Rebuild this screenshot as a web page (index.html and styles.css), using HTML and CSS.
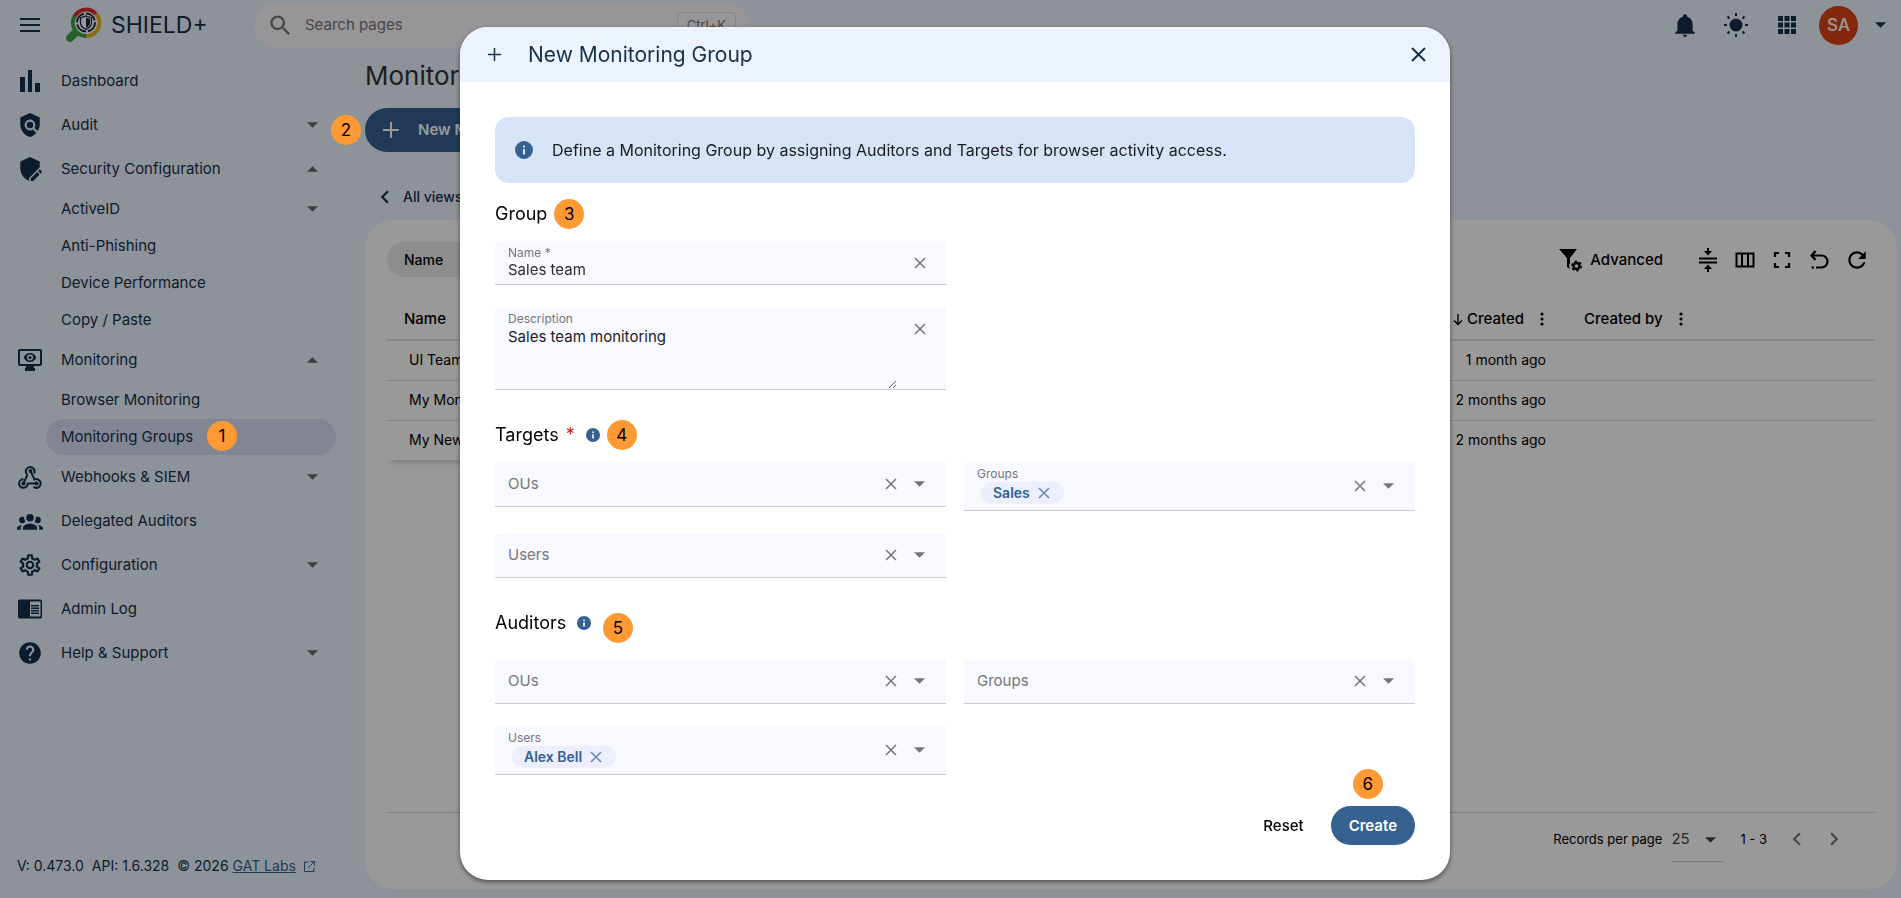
FILE: index.html
```
<!DOCTYPE html>
<html lang="en">
<head>
    <meta charset="UTF-8">
    <meta name="viewport" content="width=device-width, initial-scale=1.0">
    <title>SHIELD+ - Monitoring Groups</title>
    <link rel="stylesheet" href="styles.css">
</head>
<body>
    <svg class="sprite" aria-hidden="true">
        <symbol id="i-caret" viewBox="0 0 12 6"><path d="M0 0h12L6 6z"/></symbol>
        <symbol id="i-x" viewBox="0 0 12 12"><path d="M1 1l10 10M11 1L1 11" fill="none" stroke="currentColor" stroke-width="1.500"/></symbol>
        <symbol id="i-plus" viewBox="0 0 16 16"><path d="M8 0v16M0 8h16" fill="none" stroke="currentColor" stroke-width="2"/></symbol>
        <symbol id="i-info" viewBox="0 0 18 18"><path d="M9 0a9 9 0 1 0 0 18A9 9 0 0 0 9 0zm1 13.500H8V8h2v5.500zM10 6.500H8v-2h2v2z"/></symbol>
        <symbol id="i-dots" viewBox="0 0 4 14"><circle cx="2" cy="2" r="1.600"/><circle cx="2" cy="7" r="1.600"/><circle cx="2" cy="12" r="1.600"/></symbol>
        <symbol id="i-left" viewBox="0 0 24 24"><path d="M15.410 16.590L10.830 12l4.580-4.590L14 6l-6 6 6 6z"/></symbol>
        <symbol id="i-right" viewBox="0 0 24 24"><path d="M8.590 16.590L13.170 12 8.590 7.410 10 6l6 6-6 6z"/></symbol>
    </svg>

    <div class="app">
        <header class="topbar">
            <button class="icon-button" type="button" aria-label="Menu">
                <svg width="20" height="14" viewBox="0 0 20 14"><path d="M0 0h20v2H0zM0 6h20v2H0zM0 12h20v2H0z"/></svg>
            </button>
            <a href="#" class="logo">
                <svg width="36" height="36" viewBox="0 0 36 36">
                    <path d="M12 24L5 31" stroke="#43a047" stroke-width="8" stroke-linecap="round"/>
                    <circle cx="21" cy="16" r="12" fill="#fff"/>
                    <g fill="none" stroke-width="4">
                        <path d="M9.500 9.500A13.200 13.200 0 0 1 31 7" stroke="#d93030"/>
                        <path d="M31 7a13.200 13.200 0 0 1-9.500 22" stroke="#e5b416"/>
                        <path d="M21.500 29A13.200 13.200 0 0 1 9.500 9.500" stroke="#43a047"/>
                    </g>
                    <circle cx="21" cy="15.500" r="9" fill="none" stroke="#16263a" stroke-width="2" stroke-dasharray="12 2"/>
                    <path d="M21 9l5.500 2v4.500c0 3.500-2.300 5.500-5.500 7-3.200-1.500-5.500-3.500-5.500-7V11z" fill="#fff" stroke="#16263a" stroke-width="1.300"/>
                    <path d="M21 10.500v10.500c2.400-1.200 4-2.800 4-5.500v-3.500z" fill="#16263a"/>
                </svg>
                <span>SHIELD+</span>
            </a>
            <label class="search">
                <svg width="27" height="27" viewBox="0 0 24 24"><path d="M15.500 14h-.790l-.280-.270C15.410 12.590 16 11.110 16 9.500 16 5.910 13.090 3 9.500 3S3 5.910 3 9.500 5.910 16 9.500 16c1.610 0 3.090-.590 4.230-1.570l.270.280v.790l5 4.990L20.490 19l-4.990-5zm-6 0C7.010 14 5 11.990 5 9.500S7.010 5 9.500 5 14 7.010 14 9.500 11.990 14 9.500 14z"/></svg>
                <input type="search" placeholder="Search pages" aria-label="Search pages">
                <kbd>Ctrl+K</kbd>
            </label>
            <div class="topbar-actions">
                <button class="icon-button" type="button" aria-label="Notifications"><svg width="26" height="26" viewBox="0 0 24 24"><path d="M21,19V20H3V19L5,17V11C5,7.900 7.030,5.170 10,4.290C10,4.190 10,4.100 10,4A2,2 0 0,1 14,4C14,4.100 14,4.190 14,4.290C16.970,5.170 19,7.900 19,11V17L21,19M14,21A2,2 0 0,1 10,21"/></svg></button>
                <button class="icon-button" type="button" aria-label="Theme"><svg width="26" height="26" viewBox="0 0 26 26"><circle cx="13" cy="13" r="6.500"/><path d="M13 1v3M13 22v3M1 13h3M22 13h3M4.500 4.500l2 2M19.500 19.500l2 2M4.500 21.500l2-2M19.500 6.500l2-2" stroke="currentColor" stroke-width="2"/></svg></button>
                <button class="icon-button" type="button" aria-label="Apps"><svg width="26" height="26" viewBox="0 0 26 26"><path d="M4 4h5v5H4zM10.500 4h5v5h-5zM17 4h5v5h-5zM4 10.500h5v5H4zM10.500 10.500h5v5h-5zM17 10.500h5v5h-5zM4 17h5v5H4zM10.500 17h5v5h-5zM17 17h5v5h-5z"/></svg></button>
                <button class="account" type="button"><span class="avatar">SA</span><svg width="11" height="6"><use href="#i-caret"/></svg></button>
            </div>
        </header>

        <aside class="sidebar">
            <nav class="nav">
                <a href="#" class="nav-item">
                    <svg width="26" height="26" viewBox="0 0 26 26"><path d="M3 9h5v15H3zM11 2h4v22h-4zM18 15h5v9h-5z"/></svg>
                    <span>Dashboard</span>
                </a>
                <a href="#" class="nav-item">
                    <svg width="26" height="26" viewBox="0 0 24 24"><path d="M21 5l-9-4-9 4v6c0 5.550 3.840 10.740 9 12 2.300-.560 4.330-1.900 5.880-3.710l-3.120-3.120c-1.940 1.290-4.580 1.070-6.290-.640-1.950-1.950-1.950-5.120 0-7.070 1.950-1.950 5.120-1.950 7.070 0 1.710 1.710 1.920 4.350.640 6.290l2.900 2.900C20.290 15.690 21 13.380 21 11z"/><circle cx="12" cy="12" r="3"/></svg>
                    <span>Audit</span>
                    <svg class="caret" width="11" height="6"><use href="#i-caret"/></svg>
                </a>
                <a href="#" class="nav-item">
                    <svg width="26" height="26" viewBox="0 0 24 24"><path d="M21 10V5l-9-4-9 4v6c0 5.300 3.400 10.200 8.200 11.800v-2.600L21 10.400zM12.700 23v-2.400l5.900-5.900 2.300 2.300-5.900 6zM19.400 13.900l1.100-1.100c.3-.3.700-.3 1 0l1.300 1.300c.3.300.3.700 0 1l-1.100 1.100z"/></svg>
                    <span>Security Configuration</span>
                    <svg class="caret caret-up" width="11" height="6"><use href="#i-caret"/></svg>
                </a>
                <div class="nav-children">
                    <a href="#" class="nav-child"><span>ActiveID</span><svg class="caret" width="11" height="6"><use href="#i-caret"/></svg></a>
                    <a href="#" class="nav-child"><span>Anti-Phishing</span></a>
                    <a href="#" class="nav-child"><span>Device Performance</span></a>
                    <a href="#" class="nav-child"><span>Copy / Paste</span></a>
                </div>
                <a href="#" class="nav-item">
                    <svg width="26" height="26" viewBox="0 0 26 26"><path d="M3 2h20a2 2 0 0 1 2 2v13a2 2 0 0 1-2 2h-6v2h1v3H8v-3h1v-2H3a2 2 0 0 1-2-2V4a2 2 0 0 1 2-2zm0 2v13h20V4z" fill-rule="evenodd"/><path d="M13 6c3 0 5.300 1.800 6.300 4.500C18.300 13.200 16 15 13 15s-5.300-1.800-6.300-4.500C7.700 7.800 10 6 13 6zm0 1.500a3 3 0 1 0 0 6 3 3 0 0 0 0-6z" fill-rule="evenodd"/><circle cx="13" cy="10.500" r="1.600"/></svg>
                    <span>Monitoring</span>
                    <svg class="caret caret-up" width="11" height="6"><use href="#i-caret"/></svg>
                </a>
                <div class="nav-children">
                    <a href="#" class="nav-child"><span>Browser Monitoring</span></a>
                    <a href="#" class="nav-child active"><span>Monitoring Groups</span><b class="step step-nav">1</b></a>
                </div>
                <a href="#" class="nav-item">
                    <svg width="26" height="26" viewBox="0 0 26 26"><g fill="none" stroke="currentColor" stroke-width="2"><path d="M10.200 10.500a4.300 4.300 0 1 1 6.800-1M13.500 7l4 8.500a4.300 4.300 0 1 1-1 7.200M6.500 19.500l4-9"/><path d="M6.500 15.200a4.300 4.300 0 1 0 4.200 4.300h9"/></g><circle cx="13.500" cy="7" r="2"/><circle cx="6.500" cy="19.500" r="2"/><circle cx="19.500" cy="19.500" r="2"/></svg>
                    <span>Webhooks &amp; SIEM</span>
                    <svg class="caret" width="11" height="6"><use href="#i-caret"/></svg>
                </a>
                <a href="#" class="nav-item">
                    <svg width="26" height="26" viewBox="0 0 24 24"><path d="M12,5.500A3.500,3.500 0 0,1 15.500,9A3.500,3.500 0 0,1 12,12.500A3.500,3.500 0 0,1 8.500,9A3.500,3.500 0 0,1 12,5.500M5,8C5.560,8 6.080,8.150 6.530,8.420C6.380,9.850 6.800,11.270 7.660,12.380C7.160,13.340 6.160,14 5,14A3,3 0 0,1 2,11A3,3 0 0,1 5,8M19,8A3,3 0 0,1 22,11A3,3 0 0,1 19,14C17.840,14 16.840,13.340 16.340,12.380C17.200,11.270 17.620,9.850 17.470,8.420C17.920,8.150 18.440,8 19,8M5.500,18.250C5.500,16.180 8.410,14.500 12,14.500C15.590,14.500 18.500,16.180 18.500,18.250V20H5.500V18.250M0,20V18.500C0,17.110 1.890,15.940 4.450,15.600C3.860,16.280 3.500,17.220 3.500,18.250V20H0M24,20H20.500V18.250C20.500,17.220 20.140,16.280 19.550,15.600C22.110,15.940 24,17.110 24,18.500V20Z"/></svg>
                    <span>Delegated Auditors</span>
                </a>
                <a href="#" class="nav-item">
                    <svg width="26" height="26" viewBox="0 0 24 24"><path d="M12,8A4,4 0 0,1 16,12A4,4 0 0,1 12,16A4,4 0 0,1 8,12A4,4 0 0,1 12,8M12,10A2,2 0 0,0 10,12A2,2 0 0,0 12,14A2,2 0 0,0 14,12A2,2 0 0,0 12,10M10,22C9.750,22 9.540,21.820 9.500,21.580L9.130,18.930C8.500,18.680 7.960,18.340 7.440,17.940L4.950,18.950C4.730,19.030 4.460,18.950 4.340,18.730L2.340,15.270C2.210,15.050 2.270,14.780 2.460,14.630L4.570,12.970L4.500,12L4.570,11L2.460,9.370C2.270,9.220 2.210,8.950 2.340,8.730L4.340,5.270C4.460,5.050 4.730,4.960 4.950,5.050L7.440,6.050C7.960,5.660 8.500,5.320 9.130,5.070L9.500,2.420C9.540,2.180 9.750,2 10,2H14C14.250,2 14.460,2.180 14.500,2.420L14.870,5.070C15.500,5.320 16.040,5.660 16.560,6.050L19.050,5.050C19.270,4.960 19.540,5.050 19.660,5.270L21.660,8.730C21.790,8.950 21.730,9.220 21.540,9.370L19.430,11L19.500,12L19.430,13L21.540,14.630C21.730,14.780 21.790,15.050 21.660,15.270L19.660,18.730C19.540,18.950 19.270,19.040 19.050,18.950L16.560,17.950C16.040,18.340 15.500,18.680 14.870,18.930L14.500,21.580C14.460,21.820 14.250,22 14,22H10M11.250,4L10.880,6.610C9.680,6.860 8.620,7.500 7.850,8.390L5.440,7.350L4.690,8.650L6.800,10.200C6.400,11.370 6.400,12.640 6.800,13.800L4.680,15.360L5.430,16.660L7.860,15.620C8.630,16.500 9.680,17.140 10.870,17.380L11.240,20H12.760L13.130,17.390C14.320,17.140 15.370,16.500 16.140,15.620L18.570,16.660L19.320,15.360L17.200,13.810C17.600,12.640 17.600,11.370 17.200,10.200L19.310,8.650L18.560,7.350L16.150,8.390C15.380,7.500 14.320,6.860 13.120,6.620L12.750,4H11.250Z"/></svg>
                    <span>Configuration</span>
                    <svg class="caret" width="11" height="6"><use href="#i-caret"/></svg>
                </a>
                <a href="#" class="nav-item">
                    <svg width="26" height="26" viewBox="0 0 26 26"><path d="M2.500 3.500h21A1.500 1.500 0 0 1 25 5v16a1.500 1.500 0 0 1-1.500 1.500h-21A1.500 1.500 0 0 1 1 21V5a1.500 1.500 0 0 1 1.500-1.500zM13 5.500v15h10.500v-15zM14 9h8v1.500h-8zM14 11.500h8V13h-8zM14 14h8v1.500h-8zM14 16.500h8V18h-8z" fill-rule="evenodd"/></svg>
                    <span>Admin Log</span>
                </a>
                <a href="#" class="nav-item">
                    <svg width="26" height="26" viewBox="0 0 24 24"><path d="M12 2C6.480 2 2 6.480 2 12s4.480 10 10 10 10-4.480 10-10S17.520 2 12 2zm1 17h-2v-2h2v2zm2.070-7.750l-.900.920C13.450 12.900 13 13.500 13 15h-2v-.500c0-1.100.450-2.100 1.170-2.830l1.240-1.260c.370-.360.590-.860.590-1.410 0-1.100-.900-2-2-2s-2 .900-2 2H8c0-2.210 1.790-4 4-4s4 1.790 4 4c0 .880-.360 1.680-.930 2.250z"/></svg>
                    <span>Help &amp; Support</span>
                    <svg class="caret" width="11" height="6"><use href="#i-caret"/></svg>
                </a>
            </nav>
            <footer class="version">
                <span>V: 0.473.0</span>
                <span>API: 1.6.328</span>
                <span>© 2026 <a href="#">GAT Labs</a></span>
                <svg class="external" width="11" height="11" viewBox="0 0 11 11"><path d="M4.500 1H.500v9.500H10V6.500M6.500 .500h4V4.500M10.500.500L4 7" fill="none" stroke="currentColor"/></svg>
            </footer>
        </aside>

        <main class="content">
            <h1>Monitoring Groups</h1>
            <div class="new-group">
                <button class="button button-primary button-large" type="button"><svg width="16" height="16"><use href="#i-plus"/></svg> New Monitoring Group</button>
                <b class="step step-new">2</b>
            </div>
            <a href="#" class="back"><svg width="26" height="26"><use href="#i-left"/></svg>All views</a>

            <section class="card">
                <div class="toolbar">
                    <button class="filter-chip" type="button">Name</button>
                    <div class="toolbar-actions">
                        <button class="advanced" type="button">
                            <svg width="24" height="24" viewBox="0 0 24 24"><path d="M1 1h18l-7 9v5c-1.500 2-1 4 0 6l-3-2v-9z"/><circle cx="18.500" cy="18" r="3" fill="none" stroke="currentColor" stroke-width="2.400"/><circle cx="18.500" cy="18" r="4.600" fill="none" stroke="currentColor" stroke-width="1.800" stroke-dasharray="2.400 2.400"/></svg>
                            Advanced
                        </button>
                        <button class="icon-button" type="button" aria-label="Row density"><svg width="24" height="24" viewBox="0 0 24 24"><path d="M3 9.500h18v2H3zM3 13.500h18v2H3zM11 0h2v3h3l-4 4.500L8 3h3zM11 24h2v-3h3l-4-4.500L8 21h3z"/></svg></button>
                        <button class="icon-button" type="button" aria-label="Columns"><svg width="24" height="24" viewBox="0 0 24 24"><path d="M3.500 5.500h17v13h-17zM9 5.500v13M15 5.500v13" fill="none" stroke="currentColor" stroke-width="2"/></svg></button>
                        <button class="icon-button" type="button" aria-label="Full screen"><svg width="24" height="24" viewBox="0 0 24 24"><path d="M9 5H5v4M15 5h4v4M5 15v4h4M19 15v4h-4" fill="none" stroke="currentColor" stroke-width="2.200"/></svg></button>
                        <button class="icon-button" type="button" aria-label="Reset table"><svg width="24" height="24" viewBox="0 0 24 24"><path d="M8.500 3L4.500 7.500 8.500 12M5 7.500h9.500a6 6 0 0 1 0 12H9M4.500 19.500h2.500" fill="none" stroke="currentColor" stroke-width="2.200"/></svg></button>
                        <button class="icon-button" type="button" aria-label="Refresh"><svg width="26" height="26" viewBox="0 0 24 24"><path d="M17.650 6.350C16.200 4.900 14.210 4 12 4c-4.420 0-7.990 3.580-7.990 8s3.570 8 7.990 8c3.730 0 6.840-2.550 7.730-6h-2.080c-.820 2.330-3.040 4-5.650 4-3.310 0-6-2.690-6-6s2.690-6 6-6c1.660 0 3.140.690 4.220 1.780L13 11h7V4z"/></svg></button>
                    </div>
                </div>

                <table class="groups">
                    <thead>
                        <tr>
                            <th class="name">Name</th>
                            <th class="created">
                                <svg width="10" height="12" viewBox="0 0 10 12"><path d="M5 0v10M1 6.500l4 4 4-4" fill="none" stroke="currentColor" stroke-width="1.400"/></svg>
                                Created
                                <svg class="dots" width="4" height="14"><use href="#i-dots"/></svg>
                            </th>
                            <th class="created-by">Created by <svg class="dots" width="4" height="14"><use href="#i-dots"/></svg></th>
                        </tr>
                    </thead>
                    <tbody>
                        <tr><td>UI Team</td><td class="created">1 month ago</td><td></td></tr>
                        <tr><td>My Monitoring Group</td><td class="created">2 months ago</td><td></td></tr>
                        <tr><td>My New Group</td><td class="created">2 months ago</td><td></td></tr>
                    </tbody>
                </table>

                <div class="pager">
                    <label for="page-size">Records per page</label>
                    <div class="page-size">
                        <select id="page-size"><option>25</option></select>
                        <svg width="11" height="6"><use href="#i-caret"/></svg>
                    </div>
                    <span>1 - 3</span>
                    <div class="pager-buttons">
                        <button class="icon-button" type="button" aria-label="Previous page"><svg width="26" height="26"><use href="#i-left"/></svg></button>
                        <button class="icon-button" type="button" aria-label="Next page"><svg width="26" height="26"><use href="#i-right"/></svg></button>
                    </div>
                </div>
            </section>
        </main>
    </div>

    <div class="backdrop">
        <form class="dialog" role="dialog" aria-labelledby="dialog-title">
            <header class="dialog-header">
                <svg width="13" height="13" viewBox="0 0 13 13"><path d="M6.500 0v13M0 6.500h13" stroke="currentColor" stroke-width="1.500"/></svg>
                <h2 id="dialog-title">New Monitoring Group</h2>
                <button class="icon-button" type="button" aria-label="Close"><svg width="15" height="15" viewBox="0 0 15 15"><path d="M1 1l13 13M14 1L1 14" stroke="currentColor" stroke-width="2"/></svg></button>
            </header>

            <div class="dialog-body">
                <div class="notice">
                    <svg width="18" height="18"><use href="#i-info"/></svg>
                    Define a Monitoring Group by assigning Auditors and Targets for browser activity access.
                </div>

                <section class="form-section">
                    <h3>Group <b class="step">3</b></h3>
                    <div class="fields">
                        <div class="field filled">
                            <div class="field-main">
                                <label for="name">Name *</label>
                                <input id="name" type="text" value="Sales team">
                            </div>
                            <button class="field-button" type="button" aria-label="Clear name"><svg width="12" height="12"><use href="#i-x"/></svg></button>
                        </div>
                        <div class="field filled field-area">
                            <div class="field-main">
                                <label for="description">Description</label>
                                <textarea id="description">Sales team monitoring</textarea>
                            </div>
                            <button class="field-button" type="button" aria-label="Clear description"><svg width="12" height="12"><use href="#i-x"/></svg></button>
                        </div>
                    </div>
                </section>

                <section class="form-section">
                    <h3>Targets <span class="required">*</span> <svg class="info" width="14" height="14"><use href="#i-info"/></svg> <b class="step">4</b></h3>
                    <div class="fields">
                        <div class="field">
                            <div class="field-main">
                                <label for="target-ous">OUs</label>
                                <input id="target-ous" type="text">
                            </div>
                            <button class="field-button" type="button" aria-label="Clear OUs"><svg width="12" height="12"><use href="#i-x"/></svg></button>
                            <button class="field-button" type="button" aria-label="Open OUs"><svg width="11" height="6"><use href="#i-caret"/></svg></button>
                        </div>
                        <div class="field filled">
                            <div class="field-main">
                                <label for="target-groups">Groups</label>
                                <div class="chips">
                                    <span class="chip">Sales <button type="button" aria-label="Remove Sales"><svg width="12" height="12"><use href="#i-x"/></svg></button></span>
                                    <input id="target-groups" type="text">
                                </div>
                            </div>
                            <button class="field-button" type="button" aria-label="Clear groups"><svg width="12" height="12"><use href="#i-x"/></svg></button>
                            <button class="field-button" type="button" aria-label="Open groups"><svg width="11" height="6"><use href="#i-caret"/></svg></button>
                        </div>
                        <div class="field">
                            <div class="field-main">
                                <label for="target-users">Users</label>
                                <input id="target-users" type="text">
                            </div>
                            <button class="field-button" type="button" aria-label="Clear users"><svg width="12" height="12"><use href="#i-x"/></svg></button>
                            <button class="field-button" type="button" aria-label="Open users"><svg width="11" height="6"><use href="#i-caret"/></svg></button>
                        </div>
                    </div>
                </section>

                <section class="form-section auditors">
                    <h3>Auditors <svg class="info" width="14" height="14"><use href="#i-info"/></svg> <b class="step step-auditors">5</b></h3>
                    <div class="fields">
                        <div class="field">
                            <div class="field-main">
                                <label for="auditor-ous">OUs</label>
                                <input id="auditor-ous" type="text">
                            </div>
                            <button class="field-button" type="button" aria-label="Clear OUs"><svg width="12" height="12"><use href="#i-x"/></svg></button>
                            <button class="field-button" type="button" aria-label="Open OUs"><svg width="11" height="6"><use href="#i-caret"/></svg></button>
                        </div>
                        <div class="field">
                            <div class="field-main">
                                <label for="auditor-groups">Groups</label>
                                <input id="auditor-groups" type="text">
                            </div>
                            <button class="field-button" type="button" aria-label="Clear groups"><svg width="12" height="12"><use href="#i-x"/></svg></button>
                            <button class="field-button" type="button" aria-label="Open groups"><svg width="11" height="6"><use href="#i-caret"/></svg></button>
                        </div>
                        <div class="field filled">
                            <div class="field-main">
                                <label for="auditor-users">Users</label>
                                <div class="chips">
                                    <span class="chip">Alex Bell <button type="button" aria-label="Remove Alex Bell"><svg width="12" height="12"><use href="#i-x"/></svg></button></span>
                                    <input id="auditor-users" type="text">
                                </div>
                            </div>
                            <button class="field-button" type="button" aria-label="Clear users"><svg width="12" height="12"><use href="#i-x"/></svg></button>
                            <button class="field-button" type="button" aria-label="Open users"><svg width="11" height="6"><use href="#i-caret"/></svg></button>
                        </div>
                    </div>
                </section>

                <div class="form-action">
                    <button class="button" type="reset">Reset</button>
                    <div class="submit">
                        <button class="button button-primary" type="submit">Create</button>
                        <b class="step step-create">6</b>
                    </div>
                </div>
            </div>
        </form>
    </div>
</body>
</html>
```

FILE: styles.css
```
* {
    box-sizing: border-box;
}

html,
body {
    margin: 0;
    padding: 0;
}

body {
    font-family: Inter, "Liberation Sans", sans-serif;
    font-size: 15px;
    line-height: 20px;
    color: #000;
    background-color: #edf5ff;
}

button,
input,
select,
textarea {
    font: inherit;
    color: inherit;
    background: none;
    border: none;
    padding: 0;
    margin: 0;
    outline: none;
}

button {
    cursor: pointer;
}

a {
    color: inherit;
    text-decoration: none;
}

h1,
h2,
h3 {
    margin: 0;
    font-weight: 400;
}

svg {
    display: block;
    flex: none;
    fill: currentColor;
}

.sprite {
    position: absolute;
    width: 0;
    height: 0;
}

.icon-button {
    display: flex;
    align-items: center;
    justify-content: center;
}

.app {
    display: grid;
    grid-template-columns: 365px 1fr;
    grid-template-rows: 50px 1fr;
    min-height: 100vh;
    color: #17304a;
}

/* numbered markers */

.step {
    display: flex;
    align-items: center;
    justify-content: center;
    width: 30px;
    height: 30px;
    border-radius: 50%;
    background-color: #ff9933;
    color: #000;
    font-size: 17px;
    font-weight: 400;
    z-index: 20;
}

.step-nav,
.step-new,
.step-create,
.step-auditors {
    position: absolute;
}

.step-nav {
    left: 161px;
    top: 2px;
}

.step-new {
    left: -34px;
    top: 7px;
}

.step-create {
    left: 22px;
    top: -37px;
}

.step-auditors {
    left: 108px;
    top: 5px;
}

/* top bar */

.topbar {
    grid-column: 1 / -1;
    display: flex;
    align-items: center;
    padding: 0 15px 0 20px;
}

.logo {
    display: flex;
    align-items: center;
    gap: 10px;
    width: 189px;
    margin-left: 25px;
    font-size: 23px;
}

.search {
    display: flex;
    align-items: center;
    gap: 11px;
    width: 495px;
    height: 45px;
    padding: 0 13px;
    border-radius: 23px;
    background-color: #fdf8ff;
    color: #777;
}

.search input {
    flex: 1;
    min-width: 0;
}

.search input::placeholder {
    color: #777;
    opacity: 1;
}

.search kbd {
    padding: 2px 9px;
    border: 1px solid #ddd;
    border-radius: 4px;
    font: inherit;
    font-size: 13px;
}

.topbar-actions {
    display: flex;
    align-items: center;
    gap: 25px;
    margin-left: auto;
}

.account {
    display: flex;
    align-items: center;
    gap: 17px;
    margin-left: -6px;
}

.avatar {
    display: flex;
    align-items: center;
    justify-content: center;
    width: 39px;
    height: 39px;
    border-radius: 50%;
    background-color: #da4415;
    color: #fff;
    font-size: 17px;
    font-weight: 500;
}

/* sidebar */

.sidebar {
    display: flex;
    flex-direction: column;
    padding: 9px 0 22px;
}

.nav-item {
    display: flex;
    align-items: center;
    gap: 18px;
    height: 44px;
    padding: 0 47px 0 17px;
}

.nav-children {
    display: flex;
    flex-direction: column;
    gap: 1px;
    padding: 0 29px 0 46px;
}

.nav-child {
    position: relative;
    display: flex;
    align-items: center;
    height: 36px;
    padding: 0 18px 0 15px;
    border-radius: 18px;
}

.nav-child.active {
    background-color: #d9e0f5;
}

.caret {
    margin-left: auto;
    color: #666;
}

.caret-up {
    transform: rotate(180deg);
}

.version {
    display: flex;
    align-items: center;
    gap: 8px;
    margin-top: auto;
    padding-left: 17px;
    font-size: 14px;
}

.version a,
.external {
    color: #35618e;
}

.version a {
    text-decoration: underline;
}

/* page */

.content {
    display: flex;
    flex-direction: column;
    padding: 10px 4px 9px 0;
}

.content h1 {
    font-size: 26px;
    line-height: 32px;
    color: #333;
}

.new-group {
    position: relative;
    align-self: flex-start;
    margin-top: 16px;
}

.button {
    display: flex;
    align-items: center;
    height: 39px;
    padding: 0 18px;
    border-radius: 22px;
    font-weight: 500;
}

.button-primary {
    background-color: #35608f;
    color: #fff;
    font-weight: 600;
}

.button-large {
    gap: 19px;
    height: 44px;
}

.back {
    display: flex;
    align-items: center;
    gap: 5px;
    margin: 32px 0 10px 7px;
    font-size: 14px;
    font-weight: 500;
}

.card {
    flex: 1;
    display: flex;
    flex-direction: column;
    padding: 22px;
    border-radius: 28px;
    background-color: #fff;
    color: #000;
}

.toolbar {
    display: flex;
    align-items: center;
    justify-content: space-between;
}

.filter-chip {
    width: 220px;
    height: 35px;
    padding-left: 17px;
    border-radius: 18px;
    background-color: #ececec;
    font-size: 14px;
    font-weight: 500;
    text-align: left;
}

.toolbar-actions {
    display: flex;
    align-items: center;
    gap: 13px;
    padding-right: 5px;
}

.advanced {
    display: flex;
    align-items: center;
    gap: 8px;
    margin-right: 20px;
    font-weight: 500;
}

.groups {
    width: 100%;
    margin-top: 21px;
    border-collapse: collapse;
}

.groups th {
    height: 42px;
    padding: 0 17px;
    border-bottom: 2px solid #e0e0e0;
    font-weight: 500;
    text-align: left;
}

.groups td {
    height: 40px;
    padding: 0 22px;
    font-size: 14px;
}

.groups tbody tr + tr td {
    border-top: 1px solid #e0e0e0;
}

.groups tr:last-child td:first-child {
    box-shadow: 0 6px 6px -4px rgba(0, 0, 0, 0.2);
}

.groups svg {
    display: inline-block;
    vertical-align: -2px;
}

.groups .dots {
    margin-left: 12px;
}

.groups .name {
    width: 260px;
}

.groups .created {
    text-align: right;
    padding-right: 18px;
}

.groups th.created {
    padding-right: 20px;
}

.groups .created-by {
    width: 311px;
    padding-left: 20px;
}

.pager {
    display: flex;
    align-items: flex-start;
    justify-content: flex-end;
    gap: 17px;
    margin-top: auto;
    padding: 16px 28px 5px 0;
    border-top: 1px solid #d0d0d0;
    font-size: 13px;
}

.pager label {
    margin-right: -8px;
}

.page-size {
    display: flex;
    align-items: flex-start;
    width: 52px;
    height: 33px;
    padding-right: 7px;
    border-bottom: 1px solid #c8c8c8;
    color: #444;
    font-size: 15px;
}

.page-size select {
    flex: 1;
    appearance: none;
}

.page-size svg {
    margin-top: 8px;
}

.pager-buttons {
    display: flex;
    gap: 11px;
    height: 20px;
    color: #777;
}

/* dialog */

.backdrop {
    position: fixed;
    inset: 0;
    z-index: 10;
    display: flex;
    align-items: center;
    justify-content: center;
    padding: 9px 0 0 9px;
    background-color: rgba(0, 0, 0, 0.4);
}

.dialog {
    width: 990px;
    border-radius: 28px;
    overflow: hidden;
    background-color: #fff;
    box-shadow: 0 2px 5px rgba(0, 0, 0, 0.5);
}

.dialog-header {
    display: flex;
    align-items: center;
    height: 55px;
    padding: 0 24px 0 28px;
    background-color: #ecf3ff;
    color: #17304a;
}

.dialog-header h2 {
    flex: 1;
    margin-left: 27px;
    font-size: 21px;
}

.dialog-body {
    padding: 35px;
}

.notice {
    display: flex;
    align-items: center;
    gap: 19px;
    min-height: 66px;
    padding: 0 20px;
    border-radius: 14px;
    background-color: #d7e3f7;
    color: #1a1b1f;
    font-size: 16px;
}

.notice svg,
.info {
    color: #35608f;
}

.form-section {
    margin-top: 30px;
}

.notice + .form-section {
    margin-top: 16px;
}

.form-section h3 {
    position: relative;
    display: flex;
    align-items: center;
    gap: 7px;
    height: 30px;
    margin-bottom: 12px;
    font-size: 18px;
}

.form-section.auditors h3 {
    margin-bottom: 21px;
}

.required {
    color: #c5221f;
}

.info {
    margin-left: 4px;
}

.fields {
    display: grid;
    grid-template-columns: repeat(2, minmax(0, 1fr));
    align-items: start;
    gap: 22px 18px;
}

.field {
    display: flex;
    align-items: center;
    gap: 16px;
    min-height: 45px;
    padding: 0 20px 0 13px;
    border-bottom: 1px solid #c9cad0;
    border-radius: 4px 4px 0 0;
    background-color: #f8f9ff;
    color: #74767a;
}

.notice + .form-section .field {
    grid-column: 1;
    min-height: 44px;
}

.field-main {
    flex: 1;
    display: flex;
    min-width: 0;
}

.field-main input {
    flex: 1;
    min-width: 0;
    color: #2b2c30;
}

.filled .field-main {
    flex-direction: column;
    align-self: flex-start;
    padding-top: 4px;
}

.filled label {
    font-size: 12px;
    line-height: 15px;
}

.field-area {
    align-items: flex-start;
}

.field-area textarea {
    height: 63px;
    padding-top: 1px;
    color: #1a1b1f;
    resize: vertical;
}

.field-area .field-button {
    margin-top: 12px;
}

.field-button {
    display: flex;
    align-items: center;
    justify-content: center;
    width: 13px;
    height: 20px;
}

.chips {
    display: flex;
    padding: 1px 0 6px 4px;
}

.chip {
    display: flex;
    align-items: center;
    gap: 8px;
    height: 22px;
    padding: 0 14px 0 12px;
    border-radius: 11px;
    background-color: #eceffb;
    color: #35608f;
    font-size: 14px;
    font-weight: 600;
}

.chip button {
    opacity: 0.7;
}

.form-action {
    display: flex;
    align-items: center;
    justify-content: flex-end;
    gap: 9px;
    margin-top: 31px;
}

.submit {
    position: relative;
}
```
